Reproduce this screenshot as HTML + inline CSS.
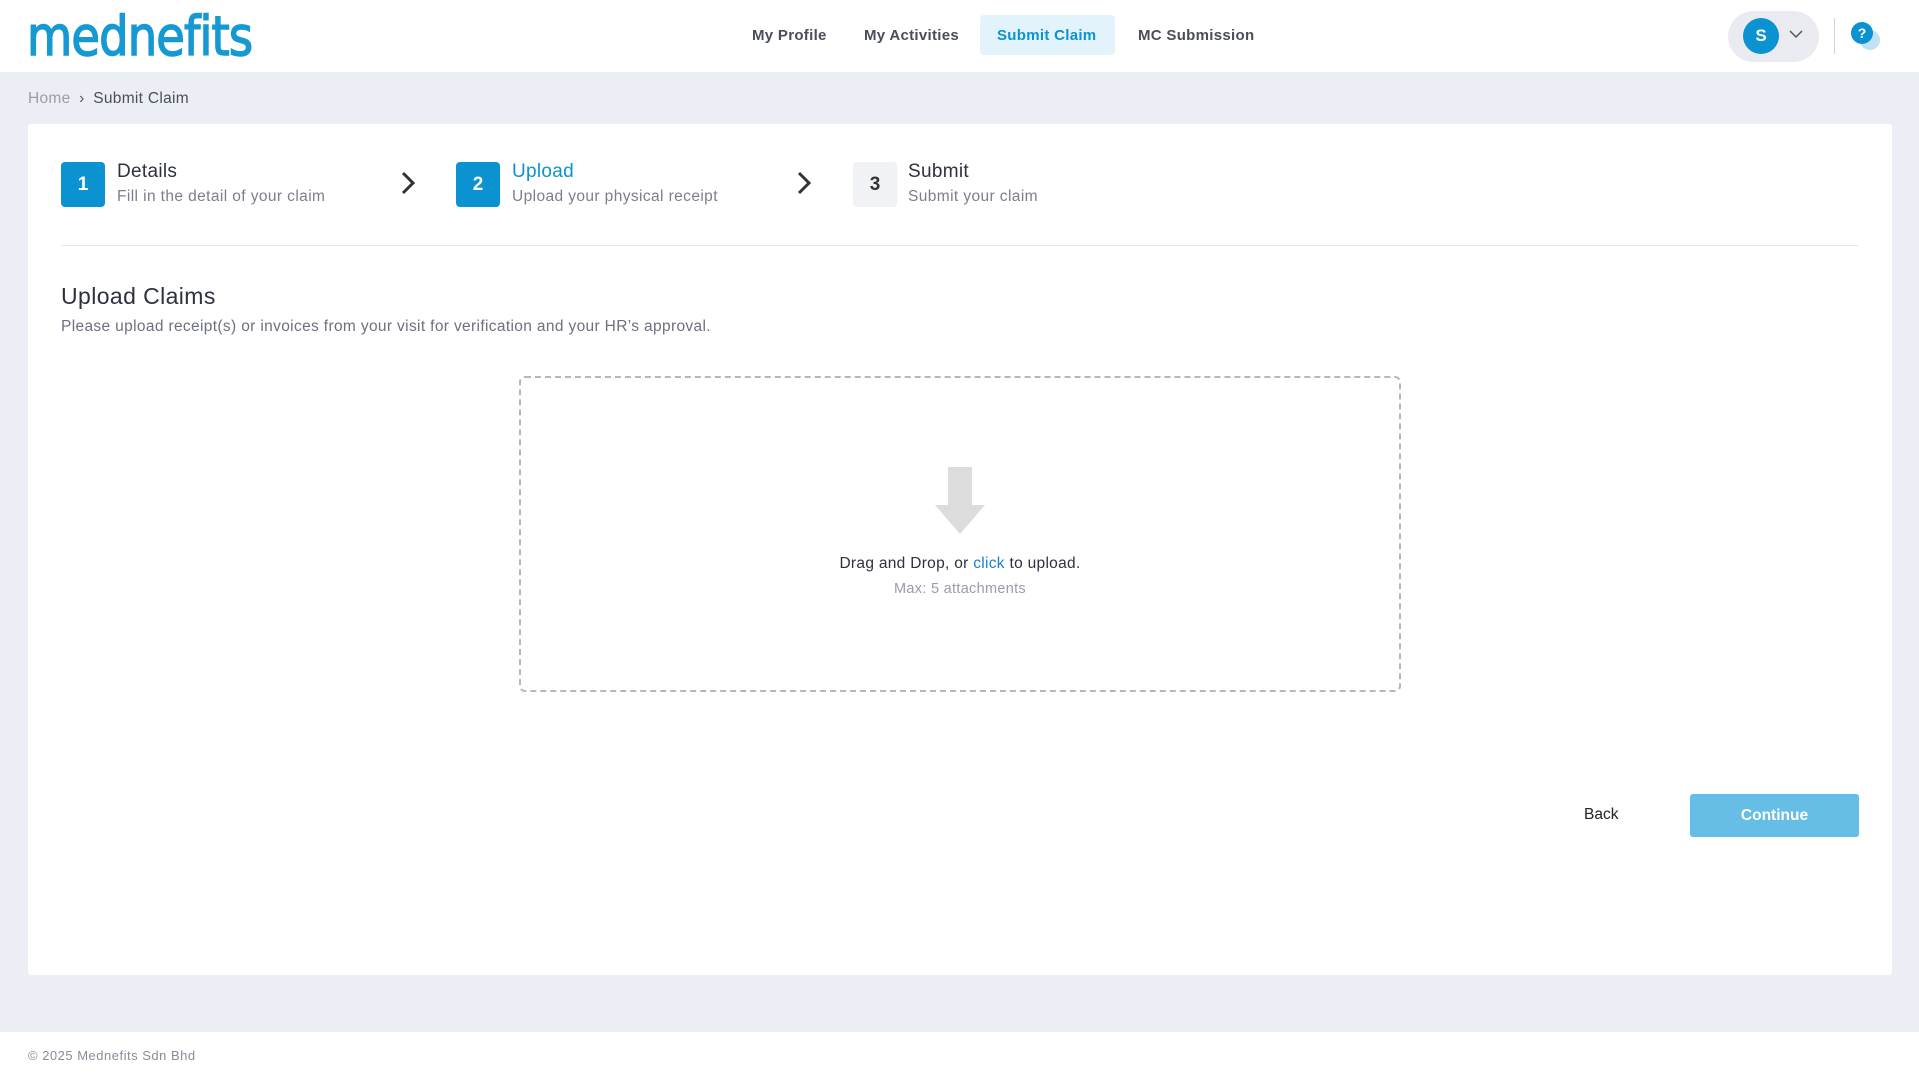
<!DOCTYPE html><html><head><style>
*{margin:0;padding:0;box-sizing:border-box}
body{width:1919px;height:1079px;background:#eceef6;font-family:"Liberation Sans",sans-serif;position:relative;overflow:hidden;color:#2e3140}
.a{position:absolute}
.hdr{left:0;top:0;width:1919px;height:72px;background:#fff}
.nav{font-size:15px;font-weight:bold;color:#4a4d5c;top:27px;letter-spacing:0.3px}
.box{width:44px;height:45px;border-radius:4px;background:#0b92d0;color:#fff;font-size:19px;font-weight:bold;text-align:center;line-height:45px}
.t{font-size:19px;color:#2e3140;letter-spacing:0.3px}
.s{font-size:15.5px;color:#7b7e8e;letter-spacing:0.4px}
</style></head><body>
<div class="a hdr"></div>
<div class="a" style="left:27px;top:7px;font-size:54px;font-weight:normal;color:#1699d3;letter-spacing:-1px;font-family:'DejaVu Sans',sans-serif;line-height:60px;transform:scaleX(0.86);transform-origin:left;-webkit-text-stroke:1.5px #1699d3">mednefits</div>
<div class="a nav" style="left:752px">My Profile</div>
<div class="a nav" style="left:864px">My Activities</div>
<div class="a" style="left:980px;top:15px;width:135px;height:40px;background:#e3f3fb;border-radius:4px"></div>
<div class="a nav" style="left:997px;color:#0b92d0">Submit Claim</div>
<div class="a nav" style="left:1138px">MC Submission</div>
<div class="a" style="left:1728px;top:11px;width:91px;height:51px;border-radius:26px;background:#eaebf0"></div>
<div class="a" style="left:1743px;top:18px;width:36px;height:36px;border-radius:50%;background:#0b92d0;color:#fff;font-weight:bold;font-size:17px;text-align:center;line-height:36px">S</div>
<svg class="a" style="left:1788px;top:28px" width="16" height="12"><path d="M2 3l6 6 6-6" stroke="#555" stroke-width="1.5" fill="none"/></svg>
<div class="a" style="left:1834px;top:18px;width:1px;height:36px;background:#d0d0dc"></div>
<div class="a" style="left:1860px;top:30px;width:20px;height:20px;border-radius:50%;background:#bfe3f4"></div>
<div class="a" style="left:1851px;top:22px;width:22px;height:22px;border-radius:50%;background:#0b92d0;color:#fff;font-size:14px;font-weight:bold;text-align:center;line-height:22px">?</div>
<div class="a" style="left:28px;top:90px;font-size:15.5px;color:#9a9cab;letter-spacing:0.3px">Home <span style="color:#555;margin:0 4px">›</span> <span style="color:#4a4d5c">Submit Claim</span></div>
<div class="a" style="left:28px;top:124px;width:1864px;height:851px;background:#fff;border-radius:3px"></div>
<div class="a box" style="left:61px;top:162px">1</div>
<div class="a t" style="left:117px;top:161px">Details</div>
<div class="a s" style="left:117px;top:188px">Fill in the detail of your claim</div>
<svg class="a" style="left:398px;top:170px" width="20" height="26"><path d="M5 3l10 10-10 10" stroke="#333" stroke-width="3" fill="none"/></svg>
<div class="a box" style="left:456px;top:162px">2</div>
<div class="a t" style="left:512px;top:161px;color:#0b92d0">Upload</div>
<div class="a s" style="left:512px;top:188px">Upload your physical receipt</div>
<svg class="a" style="left:794px;top:170px" width="20" height="26"><path d="M5 3l10 10-10 10" stroke="#333" stroke-width="3" fill="none"/></svg>
<div class="a box" style="left:853px;top:162px;background:#f1f2f6;color:#333">3</div>
<div class="a t" style="left:908px;top:161px">Submit</div>
<div class="a s" style="left:908px;top:188px">Submit your claim</div>
<div class="a" style="left:61px;top:245px;width:1797px;height:1px;background:#e6e7ee"></div>
<div class="a" style="left:61px;top:283px;font-size:23px;color:#2e3140;letter-spacing:0.4px">Upload Claims</div>
<div class="a" style="left:61px;top:318px;font-size:15.5px;color:#6d7080;letter-spacing:0.35px">Please upload receipt(s) or invoices from your visit for verification and your HR’s approval.</div>
<div class="a" style="left:519px;top:376px;width:882px;height:316px;border:2px dashed #b5b6be;border-radius:6px"></div>
<svg class="a" style="left:934px;top:467px" width="52" height="68"><path d="M14 0h24v38h13L26 67 1 38h13z" fill="#dcdcdc"/></svg>
<div class="a" style="left:519px;top:555px;width:882px;text-align:center;font-size:15.5px;color:#2e3140;letter-spacing:0.3px">Drag and Drop, or <span style="color:#1a7fd0">click</span> to upload.</div>
<div class="a" style="left:519px;top:581px;width:882px;text-align:center;font-size:14.5px;color:#9a9cab;letter-spacing:0.3px">Max: 5 attachments</div>
<div class="a" style="left:1584px;top:806px;font-size:15.5px;color:#222">Back</div>
<div class="a" style="left:1690px;top:794px;width:169px;height:43px;background:#66bde6;border-radius:3px;color:#fff;font-size:15.5px;font-weight:bold;text-align:center;line-height:43px">Continue</div>
<div class="a" style="left:0;top:1032px;width:1919px;height:47px;background:#fff"></div>
<div class="a" style="left:28px;top:1048px;font-size:13px;color:#8a8c99;letter-spacing:0.5px">© 2025 Mednefits Sdn Bhd</div>
</body></html>
